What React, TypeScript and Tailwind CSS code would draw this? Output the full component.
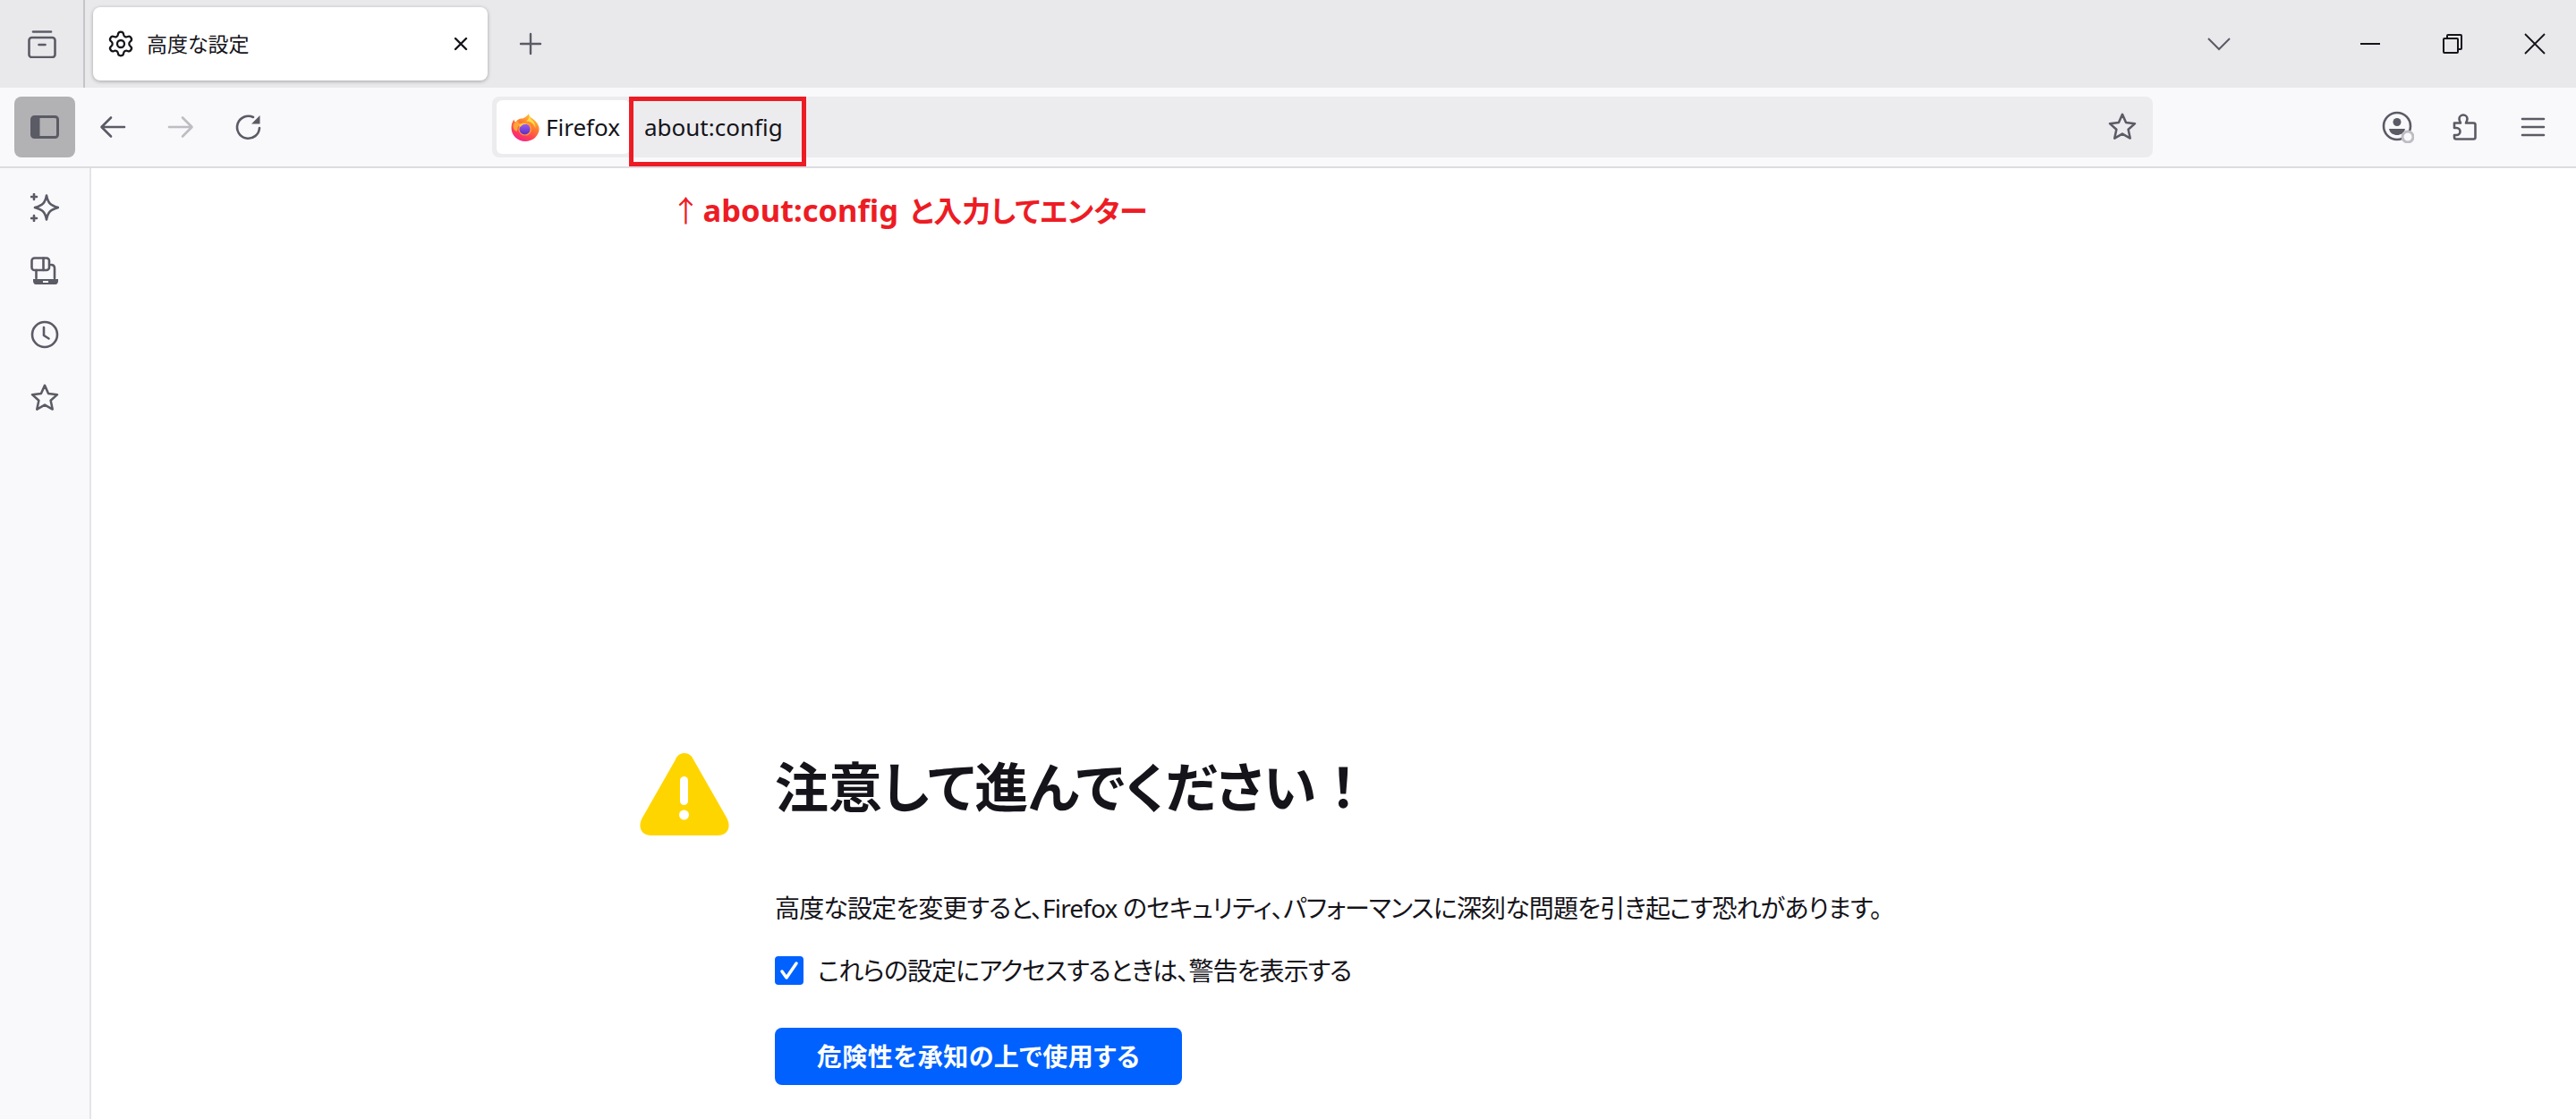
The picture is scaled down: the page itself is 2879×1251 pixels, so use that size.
import type { ReactNode } from "react"
import { Settings } from "lucide-react"

const ink = "#5b5b66"

function Glyph({ size = 32, color = ink, width = 2.6, children }: { size?: number; color?: string; width?: number; children: ReactNode }) {
  return (
    <svg width={size} height={size} viewBox="0 0 32 32" fill="none" stroke={color} strokeWidth={width} strokeLinecap="round" strokeLinejoin="round">
      {children}
    </svg>
  )
}

function StarIcon() {
  return (
    <svg width="32" height="32" viewBox="1.500 1.500 29 29" fill="none" stroke={ink} strokeWidth="2.300" strokeLinejoin="round">
      <path d="M16 3.200l3.700 8.300 9 1-6.700 6 1.900 8.900L16 22.900 8.100 27.400 10 18.500l-6.700-6 9-1z" />
    </svg>
  )
}

function FirefoxLogo() {
  return (
    <svg width="32" height="32" viewBox="0 0 32 32">
      <defs>
        <linearGradient id="ffBody" x1="0.8" y1="0.05" x2="0.3" y2="1">
          <stop offset="0" stopColor="#ffc93a" />
          <stop offset="0.4" stopColor="#ff7a2e" />
          <stop offset="0.75" stopColor="#ff3d55" />
          <stop offset="1" stopColor="#f5208f" />
        </linearGradient>
        <linearGradient id="ffGlobe" x1="0.5" y1="0" x2="0.5" y2="1">
          <stop offset="0" stopColor="#9a5cf5" />
          <stop offset="1" stopColor="#5d2fc0" />
        </linearGradient>
      </defs>
      <path d="M20 1C20 5 24 6 27 9C31 13 32 17 31.400 20C30 27 24 32 16 32C7 32 0.500 25 0.500 17C0.500 13 1.500 10 3.500 7.500C3.800 9.500 4.500 10.500 5.500 11C7 7.500 10 6.500 12 6.500C14 6.500 17 5 20 1Z" fill="url(#ffBody)" />
      <path d="M21 2C20 6 24 8 26 11C27 13 27.500 15 27.500 17C25 11 21 9 17 9.500C20 7.500 20.500 5 21 2Z" fill="#ffe14d" />
      <path d="M2.500 15C3 11 6 9 8.500 9.500C7.500 10.500 9 12 11 12.500L8.500 15C7 16.500 8 19 6.500 21C4 20 2.500 18 2.500 15Z" fill="#ffa436" />
      <circle cx="15.800" cy="18.200" r="7.400" fill="#ff9a3c" />
      <circle cx="15.500" cy="18.500" r="6" fill="url(#ffGlobe)" />
      <path d="M9 14C11 11.500 15 11 18 12.500C15 12.500 12 13.500 10.500 16Z" fill="#ffd23f" />
    </svg>
  )
}

function SidebarItem({ children }: { children: ReactNode }) {
  return <div className="h-[71px] flex items-center justify-center">{children}</div>
}

export default function App() {
  return (
    <div className="w-[2879px] h-[1251px] overflow-hidden flex flex-col bg-white text-[#15141a] font-['Noto_Sans','Noto_Sans_CJK_JP',sans-serif] [font-feature-settings:'palt']">
      {/* tab strip */}
      <div className="h-[98px] shrink-0 bg-[#e9e9ec] flex items-center">
        <div className="w-[95px] h-full flex items-center justify-center border-r-2 border-[#c5c5c9]">
          <Glyph>
            <path d="M6 2.500h20" />
            <rect x="1.500" y="9" width="29" height="22" rx="3" />
            <path d="M12.500 17h7" />
          </Glyph>
        </div>
        <div className="ml-[9px] w-[441px] h-[82px] bg-white rounded-[8px] shadow-[0_1px_4px_rgba(0,0,0,0.3)] flex items-center pl-[15px] pr-[22px]">
          <Settings size={32} color="#15141a" strokeWidth={1.700} />
          <span className="ml-[13px] text-[23px] leading-none">高度な設定</span>
          <svg className="ml-auto" width="16" height="16" viewBox="0 0 16 16" stroke="#15141a" strokeWidth="2.400" strokeLinecap="round">
            <path d="M2 2l12 12M14 2L2 14" />
          </svg>
        </div>
        <div className="ml-[32px]">
          <Glyph size={32} width={2.4}>
            <path d="M16 5v22M5 16h22" />
          </Glyph>
        </div>
        <div className="ml-auto mr-[65px]">
          <svg width="28" height="16" viewBox="0 0 28 16" fill="none" stroke={ink} strokeWidth="2">
            <path d="M2 2l12 12L26 2" />
          </svg>
        </div>
        <div className="w-[92px] flex items-center justify-center ml-[44px]">
          <div className="w-[22px] h-[2px] bg-[#15141a]" />
        </div>
        <div className="w-[92px] flex items-center justify-center">
          <svg width="22" height="22" viewBox="0 0 22 22" fill="none" stroke="#15141a" strokeWidth="2">
            <rect x="1" y="5" width="16" height="16" rx="1" />
            <path d="M5 5V2a1 1 0 0 1 1-1h14a1 1 0 0 1 1 1v14a1 1 0 0 1-1 1h-3" />
          </svg>
        </div>
        <div className="w-[92px] flex items-center justify-center">
          <svg width="24" height="24" viewBox="0 0 24 24" stroke="#15141a" strokeWidth="1.800">
            <path d="M1 1l22 22M23 1L1 23" />
          </svg>
        </div>
      </div>

      {/* toolbar */}
      <div className="h-[90px] shrink-0 bg-[#f9f9fb] flex items-center border-b-2 border-[#dcdce0] py-[10px]">
        <div className="ml-[16px] w-[68px] h-[68px] rounded-[8px] bg-[#b2b2b5] flex items-center justify-center">
          <svg width="32" height="26" viewBox="0 0 32 26">
            <rect x="1.500" y="1.500" width="29" height="23" rx="3" fill="none" stroke={ink} strokeWidth="3" />
            <rect x="1.500" y="1.500" width="9" height="23" rx="2" fill={ink} />
          </svg>
        </div>
        <div className="ml-[26px]">
          <Glyph>
            <path d="M29 16H4M14 5.500L3.500 16 14 26.500" />
          </Glyph>
        </div>
        <div className="ml-[44px]">
          <Glyph color="#bdbdc2">
            <path d="M3 16h25M18 5.500L28.500 16 18 26.500" />
          </Glyph>
        </div>
        <div className="ml-[44px]">
          <Glyph>
            <path d="M28 17A12.500 12.500 0 1 1 21 5" />
            <path d="M28.500 3v9.500H19z" fill={ink} stroke="none" />
          </Glyph>
        </div>

        <div className="relative ml-[256px] w-[1856px] h-[68px] rounded-[8px] bg-[#ececef] flex items-center pl-[5px] pr-[18px]">
          <div className="w-[149px] h-[60px] bg-white rounded-[6px] flex items-center pl-[16px] gap-[7px]">
            <FirefoxLogo />
            <span className="text-[26px] leading-none">Firefox</span>
          </div>
          <span className="ml-[16px] text-[26px] leading-none">about:config</span>
          <div className="absolute left-[153px] top-0 w-[198px] h-[78px] border-[5px] border-[#ed1c24]" />
          <div className="ml-auto">
            <StarIcon />
          </div>
        </div>

        <div className="ml-[256px]">
          <svg width="36" height="36" viewBox="0 0 36 36" fill="none">
            <circle cx="17" cy="17" r="15" stroke={ink} strokeWidth="2.600" />
            <circle cx="17" cy="12.500" r="4.500" fill={ink} />
            <path d="M8 20h18c-1 5-5 7-9 7s-8-2-9-7z" fill={ink} />
            <circle cx="29" cy="29" r="6" fill="#f9f9fb" stroke="#bdbdc2" strokeWidth="3" />
          </svg>
        </div>
        <div className="ml-[41px]">
          <Glyph>
            <path d="M4 11.500h7c-1-2-1.500-3-1.500-4.500a4.500 4.500 0 0 1 9 0c0 1.500-.5 2.500-1.500 4.500h8.500a2 2 0 0 1 2 2V27.500a2 2 0 0 1-2 2H6a2 2 0 0 1-2-2V25h2.500a4 4 0 0 0 0-8H4z" />
          </Glyph>
        </div>
        <div className="ml-[44px]">
          <Glyph>
            <path d="M4 7h24M4 16h24M4 25h24" />
          </Glyph>
        </div>
      </div>

      <div className="flex-1 flex min-h-0">
        {/* sidebar */}
        <div className="w-[102px] shrink-0 bg-[#f9f9fb] border-r-2 border-[#e4e4e8] flex flex-col pt-[8px]">
          <SidebarItem>
            <Glyph>
              <path d="M18 2.500c1.500 8 4 11 13 13.500-9 2.500-11.500 5.500-13 13.500-1.500-8-4-11-13-13.500 9-2.500 11.500-5.500 13-13.500z" />
              <path d="M4 1v6M1 4h6M4 25v6M1 28h6" />
            </Glyph>
          </SidebarItem>
          <SidebarItem>
            <svg width="32" height="32" viewBox="0 0 32 32" fill="none" stroke={ink} strokeWidth="2.600" strokeLinejoin="round" strokeLinecap="round">
              <rect x="1.500" y="1.500" width="19.500" height="13.500" rx="3" />
              <path d="M14.500 1.500v13.500" />
              <path d="M6.500 15v9M23 9c2.500 0 4 1.500 4 4v11" />
              <path d="M3 25h28v2c0 2-1 4-3 4H6c-2 0-3-2-3-4z" fill={ink} stroke="none" />
              <rect x="14" y="27" width="6" height="2" fill="#f9f9fb" stroke="none" />
            </svg>
          </SidebarItem>
          <SidebarItem>
            <Glyph>
              <circle cx="16" cy="16" r="14" />
              <path d="M15 8v9l5.500 3.500" />
            </Glyph>
          </SidebarItem>
          <SidebarItem>
            <StarIcon />
          </SidebarItem>
        </div>

        {/* page content */}
        <div className="flex-1 min-w-0 flex flex-col pl-[613px]">
          <p className="mt-[24px] ml-[35px] text-[33px] leading-[46px] font-bold text-[#ed1c24]">
            <span className="font-normal mr-[-6px]">↑</span> <span className="text-[34.500px]">about:config</span> <span className="text-[32px] ml-[4px]">と入力してエンター</span>
          </p>

          <div className="mt-[583px] flex items-start">
            <svg width="100" height="92" viewBox="0 0 100 92">
              <path d="M50 0c5 0 8.500 3 10.500 8L97 72c6 11 1 20-10 20H13C2 92-3 83 3 72L39.500 8C41.500 3 45 0 50 0z" fill="#ffd500" />
              <rect x="45" y="26" width="9" height="32" rx="4.500" fill="white" />
              <circle cx="49.500" cy="69" r="5.500" fill="white" />
            </svg>
            <h1 className="ml-[51px] text-[60px] leading-[76px] font-semibold">
              注意して進んでください<span className="[font-feature-settings:normal]">！</span>
            </h1>
          </div>

          <div className="ml-[151px]">
            <p className="mt-[61px] text-[28px] leading-[40px] tracking-[-0.850px]">高度な設定を変更すると、Firefox のセキュリティ、パフォーマンスに深刻な問題を引き起こす恐れがあります。</p>
            <label className="mt-[30px] flex items-center h-[40px]">
              <span className="w-[32px] h-[32px] rounded-[4px] bg-[#0061ff] flex items-center justify-center">
                <svg width="22" height="22" viewBox="0 0 22 22" fill="none" stroke="white" strokeWidth="3.500" strokeLinecap="round" strokeLinejoin="round">
                  <path d="M3 12l5 7L19 3" />
                </svg>
              </span>
              <span className="ml-[16px] text-[28px] leading-[40px] tracking-[-0.900px]">これらの設定にアクセスするときは、警告を表示する</span>
            </label>
            <button className="mt-[44px] w-[455px] h-[64px] rounded-[8px] bg-[#0061ff] text-white text-[28px] tracking-[0.500px] font-semibold flex items-center justify-center">危険性を承知の上で使用する</button>
          </div>
        </div>
      </div>
    </div>
  )
}
